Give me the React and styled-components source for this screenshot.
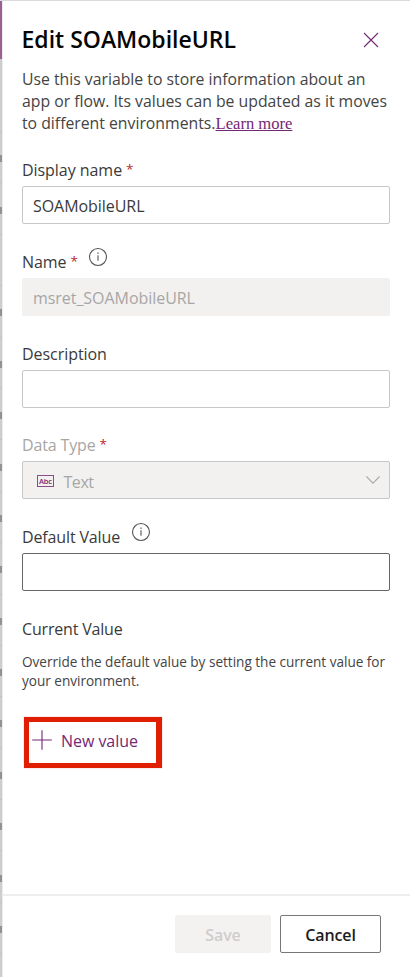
import React from 'react';
import styled, { createGlobalStyle } from 'styled-components';

const GlobalStyle = createGlobalStyle`
  * { box-sizing: border-box; }
  body { margin: 0; background: #fff; overflow: hidden; }
  body, button, input { font-family: "Open Sans", "Noto Sans", sans-serif; }
`;

const Screen = styled.div`
  display: flex;
  width: 410px;
  height: 977px;
  border-top: 1px solid #dadada;
`;

const Backdrop = styled.aside`
  flex: none;
  display: flex;
  flex-direction: column;
  width: 2px;
  overflow: hidden;
  background: #cdcdcd;
`;

const BackdropHeader = styled.div`
  flex: none;
  height: 58px;
  margin-bottom: 72px;
  background: #9a6096;
`;

const BackdropRow = styled.div`
  flex: none;
  display: flex;
  align-items: center;
  height: 51.4px;
  border-top: 1px solid #c2c2c2;
`;

const RowMark = styled.span`
  width: 2px;
  height: 7px;
  margin-top: 3px;
  background: #929292;
`;

const Panel = styled.main`
  flex: 1;
  display: flex;
  flex-direction: column;
  min-width: 0;
  background: #fff;
  border-left: 1px solid #ececec;
`;

const Content = styled.div`
  flex: 1;
  display: flex;
  flex-direction: column;
  align-items: flex-start;
  padding: 22px 20px 0 19px;
`;

const Header = styled.header`
  display: flex;
  justify-content: space-between;
  align-self: stretch;
  height: 30px;
  margin-bottom: 15px;
`;

const Title = styled.h1`
  margin: 0 0 0 -0.5px;
  font-size: 23px;
  line-height: 32px;
  font-weight: 600;
  color: #050505;
  white-space: nowrap;
`;

const CloseButton = styled.button`
  display: flex;
  width: 16px;
  height: 16px;
  margin: 9px 11px 0 0;
  padding: 0;
  border: 0;
  background: none;
  color: #742774;
`;

const Intro = styled.p`
  margin: 0 0 25px;
  font-size: 15.8px;
  line-height: 22px;
  height: 66px;
  letter-spacing: -0.01px;
  color: #444;
  white-space: nowrap;
`;

const LearnMore = styled.a`
  font: 16.6px/20px "Liberation Serif", serif;
  color: #742774;
  text-decoration: underline;
  margin-left: -4px;
`;

const Field = styled.section`
  align-self: stretch;
  height: 65px;
  margin-bottom: ${(p) => p.$gap || 27}px;
`;

const Label = styled.label`
  display: flex;
  height: 27px;
  font-size: 16px;
  line-height: 22px;
  letter-spacing: ${(p) => p.$tracking || -0.05}px;
  color: ${(p) => (p.$disabled ? '#a8a6a5' : '#3a3a3a')};
  white-space: nowrap;
`;

const Required = styled.span`
  margin-left: 4px;
  font-size: 13.5px;
  line-height: 21px;
  color: #b8282c;
`;

const InfoSlot = styled.span`
  display: flex;
  margin: -4px 0 0 ${(p) => p.$offset || 10}px;
`;

const Control = styled.div`
  display: flex;
  align-items: center;
  height: 38px;
  padding: 2px 9px 0 ${(p) => (p.$select ? 14 : 10)}px;
  border: 1px solid ${(p) => p.$border || '#c8c8c8'};
  border-radius: 2px;
  background: ${(p) => (p.$disabled ? '#f2f1f0' : '#fff')};
  color: ${(p) => (p.$disabled ? '#a8a6a5' : '#3a3a3a')};
  font-size: 16px;
  line-height: 22px;
  letter-spacing: -0.05px;
`;

const SelectText = styled.span`
  flex: 1;
  margin: 1px 0 0 9.5px;
  letter-spacing: -0.45px;
`;

const SectionTitle = styled.h2`
  margin: 0 0 12px;
  font-size: 16px;
  line-height: 22px;
  font-weight: 400;
  letter-spacing: -0.18px;
  color: #3a3a3a;
`;

const Hint = styled.p`
  margin: 0 0 27px;
  font-size: 13.6px;
  line-height: 19px;
  letter-spacing: -0.02px;
  color: #444;
  white-space: nowrap;
`;

const NewValueButton = styled.button`
  display: flex;
  align-items: flex-start;
  width: 138px;
  height: 51px;
  margin-left: 2px;
  padding: 8px 0 0 3px;
  border: 5px solid #e01f02;
  border-right-width: 6px;
  background: #fff;
  box-shadow: 0 0 1px #e88;
  color: #742774;
  font-size: 16px;
  line-height: 22px;
  letter-spacing: -0.05px;
  white-space: nowrap;
`;

const NewValueText = styled.span`
  margin-left: 9px;
`;

const Footer = styled.footer`
  display: flex;
  justify-content: flex-end;
  gap: 9px;
  height: 83px;
  padding: 19px 29px 0 0;
  border-top: 2px solid #eee;
`;

const ActionButton = styled.button`
  width: ${(p) => (p.$disabled ? 96 : 101)}px;
  height: 38px;
  padding: 1px 0 0;
  border: 1px solid ${(p) => (p.$disabled ? '#f3f2f1' : '#777')};
  border-radius: 2px;
  background: ${(p) => (p.$disabled ? '#f3f2f1' : '#fff')};
  color: ${(p) => (p.$disabled ? '#cfcdcc' : '#1c1c1c')};
  font-size: 16px;
  line-height: 22px;
  font-weight: 600;
  letter-spacing: -0.1px;
`;

const CloseIcon = () => (
  <svg width="16" height="16" viewBox="0 0 16 16" fill="none" stroke="currentColor" strokeWidth="1.1">
    <path d="M1 1 15 15M15 1 1 15" />
  </svg>
);

const InfoIcon = () => (
  <svg width="20" height="20" viewBox="0 0 20 20" fill="none" stroke="#555" strokeWidth="1.1">
    <circle cx="10" cy="10" r="8.5" />
    <path d="M10 8.2v5.5M10 5.6v1.4" />
  </svg>
);

const ChevronIcon = () => (
  <svg width="14" height="8" viewBox="0 0 14 8" fill="none" stroke="#aaa" strokeWidth="1.1" style={{ marginTop: -3 }}>
    <path d="M.4.5 7 7.1 13.6.5" />
  </svg>
);

const PlusIcon = () => (
  <svg width="20" height="20" viewBox="0 0 20 20" fill="none" stroke="#742774" strokeWidth="1.1">
    <path d="M10 .2v19.6M.2 10h19.6" />
  </svg>
);

const TypeBadge = styled.span`
  display: flex;
  align-items: center;
  justify-content: center;
  width: 17px;
  height: 12px;
  margin-top: -1px;
  border: 1px solid #8b4c8b;
  color: #742774;
  font-size: 7.5px;
  line-height: 10px;
  font-weight: 600;
  letter-spacing: -0.2px;
`;

const rows = Array.from({ length: 17 }, (_, i) => ({ id: i, marked: i !== 2 && i !== 16 }));

export default function App() {
  return (
    <>
      <GlobalStyle />
      <Screen>
        <Backdrop aria-hidden="true">
          <BackdropHeader />
          {rows.map((row) => (
            <BackdropRow key={row.id}>{row.marked && <RowMark />}</BackdropRow>
          ))}
        </Backdrop>
        <Panel>
          <Content>
            <Header>
              <Title>Edit SOAMobileURL</Title>
              <CloseButton aria-label="Close"><CloseIcon /></CloseButton>
            </Header>
            <Intro>
              Use this variable to store information about an<br />
              app or flow. Its values can be updated as it moves<br />
              to different environments. <LearnMore>Learn more</LearnMore>
            </Intro>
            <Field>
              <Label>Display name<Required>*</Required></Label>
              <Control>SOAMobileURL</Control>
            </Field>
            <Field>
              <Label>Name<Required>*</Required><InfoSlot><InfoIcon /></InfoSlot></Label>
              <Control $disabled $border="#f2f1f0">msret_SOAMobileURL</Control>
            </Field>
            <Field $gap={26}>
              <Label>Description</Label>
              <Control />
            </Field>
            <Field>
              <Label $disabled $tracking={-0.15}>Data Type<Required>*</Required></Label>
              <Control $disabled $select>
                <TypeBadge>Abc</TypeBadge>
                <SelectText>Text</SelectText>
                <ChevronIcon />
              </Control>
            </Field>
            <Field>
              <Label $tracking={-0.14}>Default Value<InfoSlot $offset={10.5}><InfoIcon /></InfoSlot></Label>
              <Control $border="#666" />
            </Field>
            <SectionTitle>Current Value</SectionTitle>
            <Hint>
              Override the default value by setting the current value for<br />
              your environment.
            </Hint>
            <NewValueButton>
              <PlusIcon />
              <NewValueText>New value</NewValueText>
            </NewValueButton>
          </Content>
          <Footer>
            <ActionButton $disabled disabled>Save</ActionButton>
            <ActionButton>Cancel</ActionButton>
          </Footer>
        </Panel>
      </Screen>
    </>
  );
}
